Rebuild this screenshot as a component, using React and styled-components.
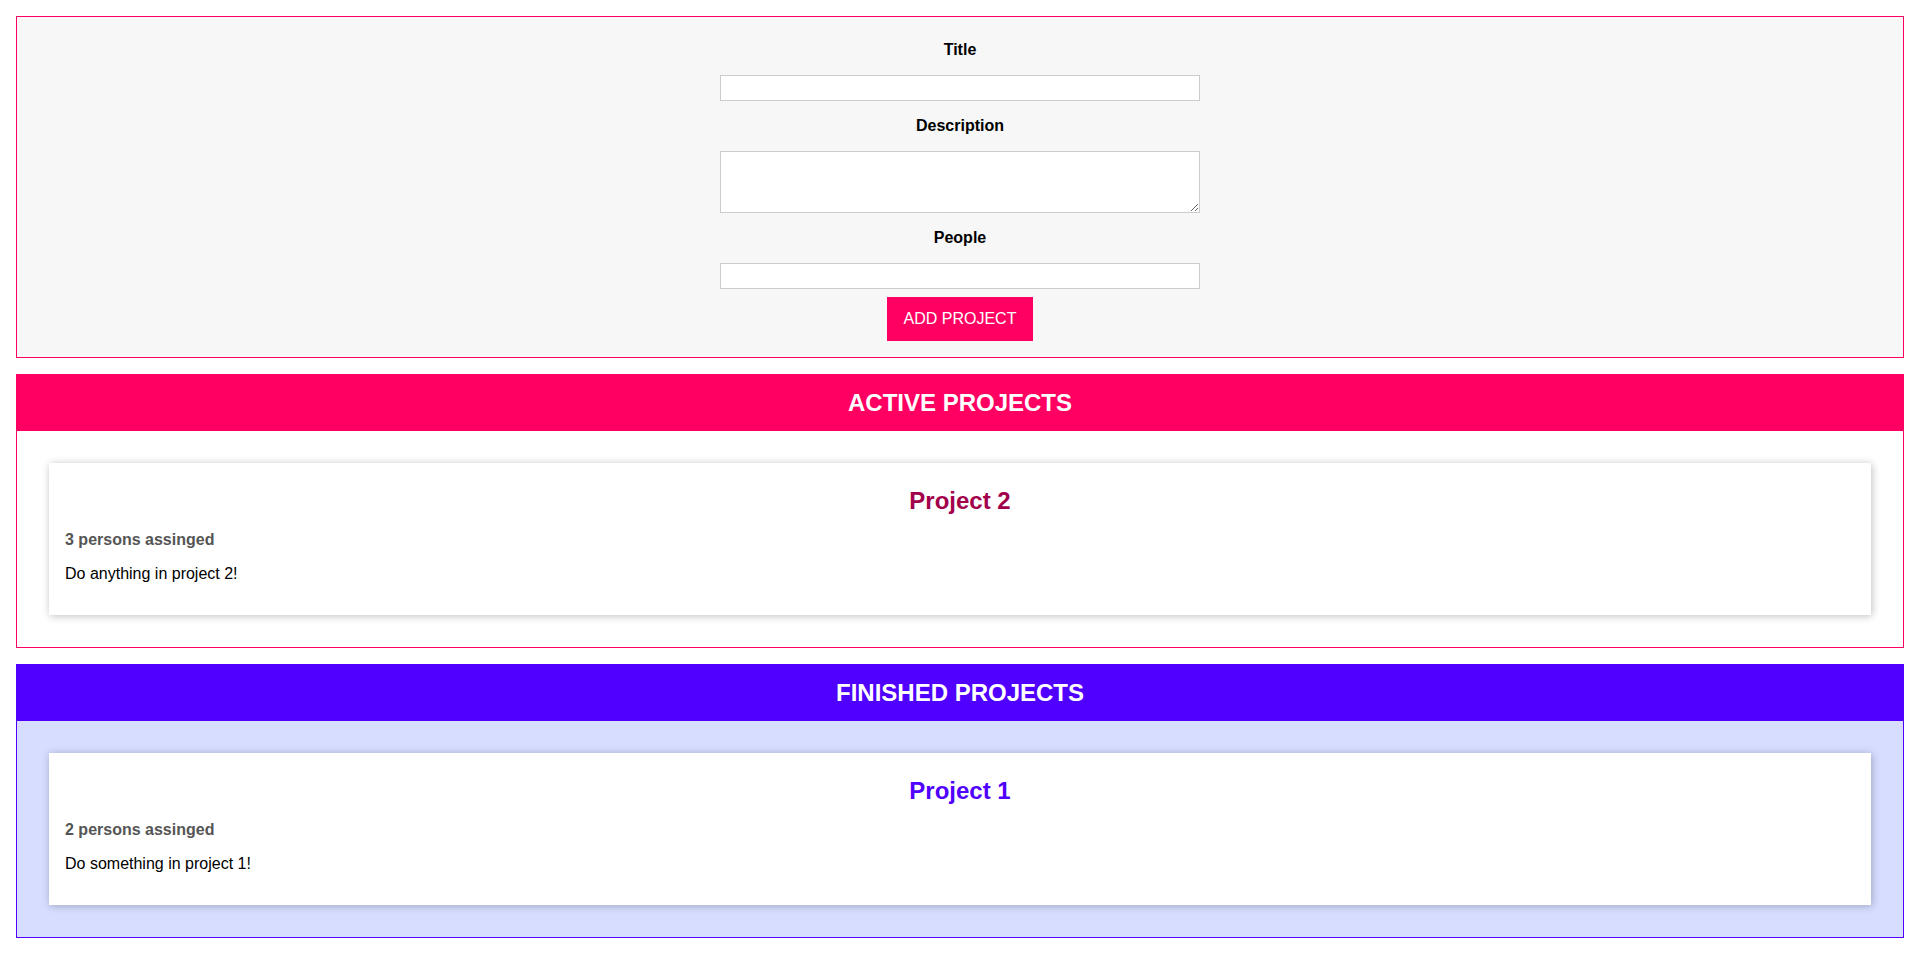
import React from 'react';
import styled, { createGlobalStyle } from 'styled-components';

const GlobalStyle = createGlobalStyle`
    * {
        box-sizing: border-box;
    }
    html {
        font-family: 'Liberation Sans', Arial, sans-serif;
    }
    body {
        margin: 0;
        background: #fff;
    }
`;

const Form = styled.form`
    margin: 16px;
    padding: 16px;
    border: 1px solid #ff0062;
    background: #f7f7f7;
    display: flex;
    flex-direction: column;
    align-items: center;
`;

const Control = styled.div`
    display: flex;
    flex-direction: column;
    align-items: center;
    width: 100%;
`;

const Label = styled.label`
    display: block;
    margin: 8px 0;
    font-weight: bold;
    font-size: 16px;
    color: #000;
`;

const Input = styled.input`
    display: block;
    margin: 8px 0;
    font: inherit;
    width: 100%;
    max-width: 480px;
    height: 26px;
    padding: 3px 6px;
    border: 1px solid #ccc;
    background: #fff;
    &:focus {
        outline: none;
        background: #fff5f9;
    }
`;

const TextArea = styled.textarea`
    display: block;
    margin: 8px 0;
    font: inherit;
    width: 100%;
    max-width: 480px;
    height: 62px;
    padding: 3px 6px;
    border: 1px solid #ccc;
    background: #fff;
    &:focus {
        outline: none;
        background: #fff5f9;
    }
`;

const Button = styled.button`
    font: inherit;
    font-size: 16px;
    background: #ff0062;
    border: 1px solid #ff0062;
    color: #fff;
    padding: 12px 16px;
    cursor: pointer;
`;

const Section = styled.section`
    margin: 16px;
    border: 1px solid ${(p) => p.$color};
`;

const Header = styled.header`
    background: ${(p) => p.$color};
    height: 56px;
    display: flex;
    justify-content: center;
    align-items: center;
`;

const HeaderTitle = styled.h2`
    margin: 0;
    color: #fff;
    font-size: 24px;
    font-weight: bold;
`;

const List = styled.ul`
    list-style: none;
    margin: 0;
    padding: 16px;
    background: ${(p) => p.$bg};
`;

const Item = styled.li`
    background: #fff;
    box-shadow: 1px 1px 8px rgba(0, 0, 0, 0.26);
    padding: 16px;
    margin: 16px;
`;

const ItemTitle = styled.h2`
    margin: 8px 0;
    font-size: 24px;
    text-align: center;
    color: ${(p) => p.$color};
`;

const Assigned = styled.h3`
    margin: 16px 0;
    font-size: 16px;
    color: #555;
`;

const Text = styled.p`
    margin: 16px 0;
    font-size: 16px;
    color: #000;
`;

const lists = [
    {
        id: 'active',
        title: 'ACTIVE PROJECTS',
        color: '#ff0062',
        textColor: '#a3004b',
        bg: '#fff',
        projects: [{ title: 'Project 2', people: 3, description: 'Do anything in project 2!' }],
    },
    {
        id: 'finished',
        title: 'FINISHED PROJECTS',
        color: '#5000ff',
        textColor: '#5000ff',
        bg: '#d6ddff',
        projects: [{ title: 'Project 1', people: 2, description: 'Do something in project 1!' }],
    },
];

const App = () => {
    return (
        <>
            <GlobalStyle />
            <Form onSubmit={(e) => e.preventDefault()}>
                <Control>
                    <Label htmlFor="title">Title</Label>
                    <Input type="text" id="title" />
                </Control>
                <Control>
                    <Label htmlFor="description">Description</Label>
                    <TextArea id="description" rows="3" />
                </Control>
                <Control>
                    <Label htmlFor="people">People</Label>
                    <Input type="number" id="people" step="1" min="0" max="10" />
                </Control>
                <Button type="submit">ADD PROJECT</Button>
            </Form>
            {lists.map((list) => (
                <Section key={list.id} $color={list.color}>
                    <Header $color={list.color}>
                        <HeaderTitle>{list.title}</HeaderTitle>
                    </Header>
                    <List $bg={list.bg}>
                        {list.projects.map((p) => (
                            <Item key={p.title}>
                                <ItemTitle $color={list.textColor}>{p.title}</ItemTitle>
                                <Assigned>{p.people} persons assinged</Assigned>
                                <Text>{p.description}</Text>
                            </Item>
                        ))}
                    </List>
                </Section>
            ))}
        </>
    );
};

export default App;
